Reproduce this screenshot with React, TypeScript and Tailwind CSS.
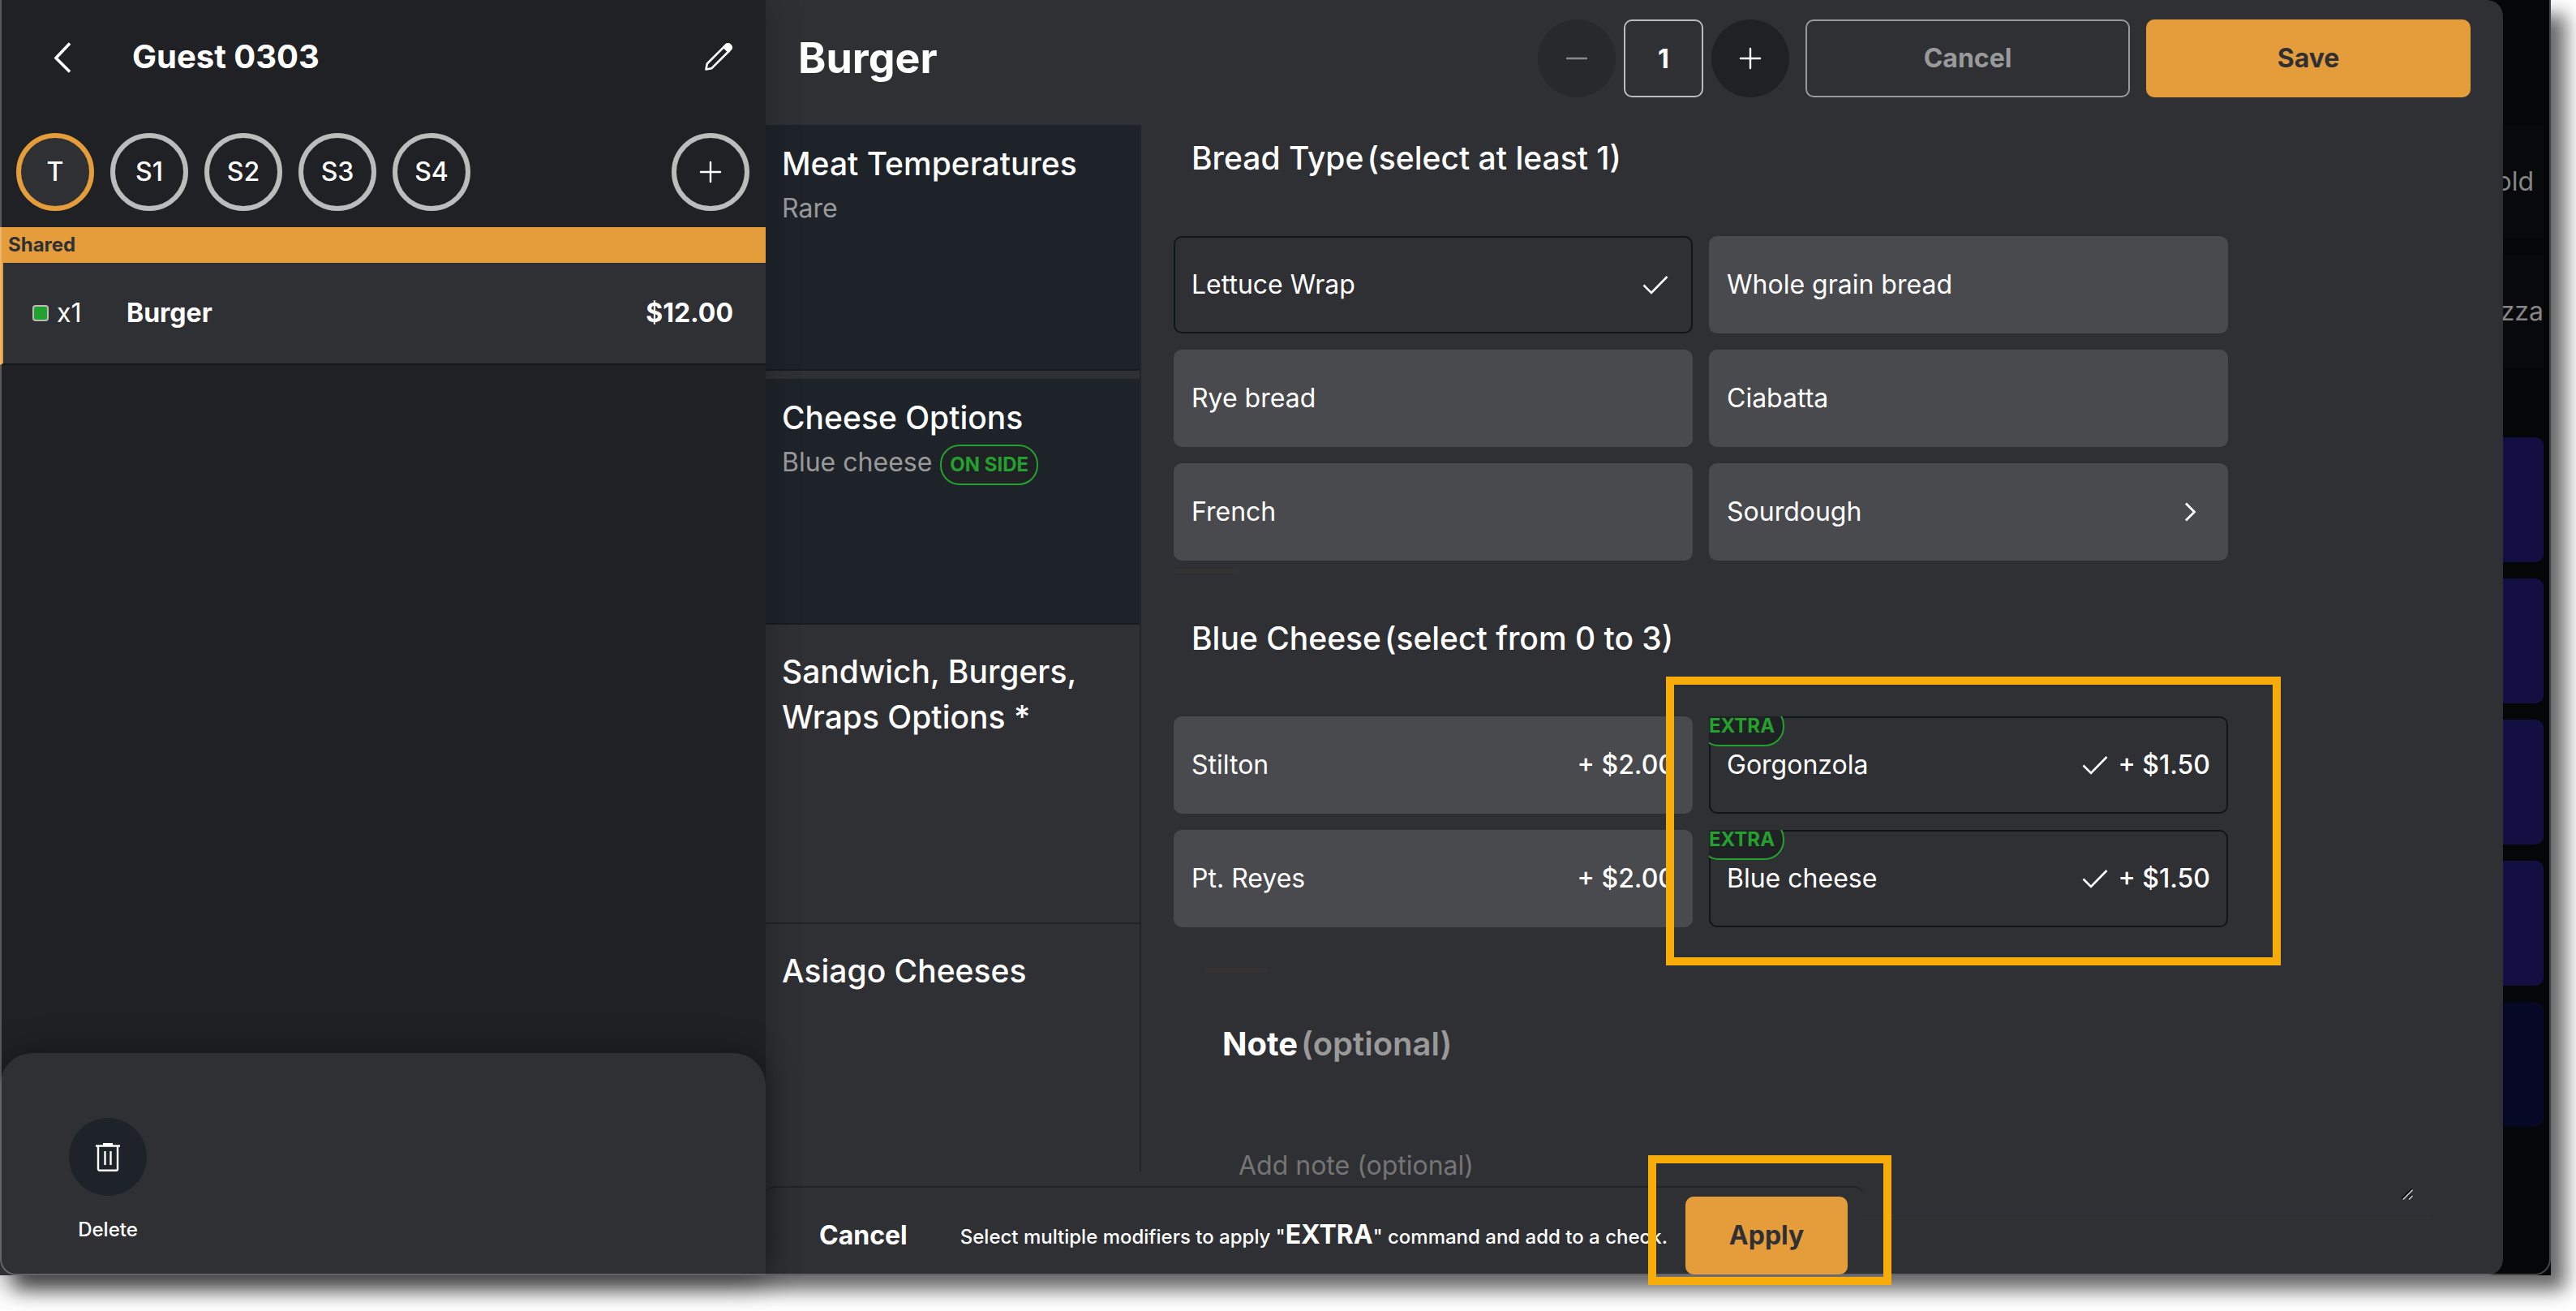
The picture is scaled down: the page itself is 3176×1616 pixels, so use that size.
import React from "react";

const seats = ["T", "S1", "S2", "S3", "S4"];

type Category = { title: string; choice?: string; tag?: string; filled?: boolean };

const categories: Category[] = [
  { title: "Meat Temperatures", choice: "Rare", filled: true },
  { title: "Cheese Options", choice: "Blue cheese", tag: "ON SIDE", filled: true },
  { title: "Sandwich, Burgers, Wraps Options *" },
];

type Option = { name: string; price?: string; selected?: boolean; extra?: boolean; more?: boolean };

const breads: Option[] = [
  { name: "Lettuce Wrap", selected: true },
  { name: "Whole grain bread" },
  { name: "Rye bread" },
  { name: "Ciabatta" },
  { name: "French" },
  { name: "Sourdough", more: true },
];

const cheeses: Option[] = [
  { name: "Stilton", price: "+ $2.00" },
  { name: "Gorgonzola", price: "+ $1.50", selected: true, extra: true },
  { name: "Pt. Reyes", price: "+ $2.00" },
  { name: "Blue cheese", price: "+ $1.50", selected: true, extra: true },
];

function PlusIcon() {
  return (
    <svg width="28" height="28" viewBox="0 0 28 28" fill="none" stroke="currentColor" strokeWidth="2.4" strokeLinecap="round" aria-hidden="true">
      <path d="M14 2v24M2 14h24" />
    </svg>
  );
}

function CheckIcon() {
  return (
    <svg width="48" height="48" viewBox="0 0 48 48" fill="none" stroke="currentColor" strokeWidth="2.6" aria-hidden="true">
      <path d="M9.500 24.500l9.500 9.500L38.500 14" />
    </svg>
  );
}

function ChevronIcon() {
  return (
    <svg width="48" height="48" viewBox="0 0 48 48" fill="none" stroke="currentColor" strokeWidth="2.8" aria-hidden="true">
      <path d="M18 13.500L28.500 24 18 34.500" />
    </svg>
  );
}

function Tag({ children }: { children: React.ReactNode }) {
  return (
    <span className="inline-flex h-[50px] items-center rounded-3xl border-2 border-[#23a02d] bg-[#202124] px-[10px] text-2xl font-bold text-[#23a02d]">
      {children}
    </span>
  );
}

function Sidebar() {
  return (
    <aside className="relative z-10 flex w-[944px] shrink-0 flex-col bg-[#202124] shadow-[0_0_40px_rgba(0,0,0,0.25)]">
      <header className="flex h-[140px] items-center pr-10 pl-[62px]">
        <button aria-label="Back" className="text-white">
          <svg width="30" height="40" viewBox="0 0 30 40" fill="none" stroke="currentColor" strokeWidth="3.6" aria-hidden="true">
            <path d="M24 3.500L7 21.500L24 38.500" />
          </svg>
        </button>
        <h1 className="ml-[71px] flex-1 text-[40px] leading-[56px] font-bold">Guest 0303</h1>
        <button aria-label="Edit guest" className="text-white">
          <svg width="36" height="36" viewBox="0 0 36 36" fill="none" stroke="currentColor" strokeWidth="2.6" strokeLinejoin="round" aria-hidden="true">
            <path d="M2.500 33.500l1.300-7L24.500 5.800l5.700 5.700L9.500 32.200z" />
            <path d="M24.500 5.800l2.600-2.600a3.300 3.300 0 0 1 4.700 0l1 1a3.300 3.300 0 0 1 0 4.700L30.200 11.500z" fill="currentColor" />
          </svg>
        </button>
      </header>

      <nav aria-label="Seats" className="flex items-center gap-5 px-5 pt-6 pb-5">
        {seats.map((seat, i) => (
          <button
            key={seat}
            className={
              i === 0
                ? "size-24 rounded-full border-6 border-[#e59d3c] bg-[#2f3034] text-[32px] leading-[44px] font-medium"
                : "size-24 rounded-full border-6 border-[#bcbcbc] text-[32px] leading-[44px] font-medium"
            }
          >
            {seat}
          </button>
        ))}
        <button aria-label="Add seat" className="ml-auto flex size-24 items-center justify-center rounded-full border-6 border-[#bcbcbc]">
          <PlusIcon />
        </button>
      </nav>

      <h2 className="bg-[#e59d3c] pl-[10px] text-2xl leading-[44px] font-bold text-[#2f3034]">Shared</h2>
      <div className="flex h-[126px] items-center border-b-2 border-l-4 border-b-[#0e161c] border-l-[#e59d3c] bg-[#2f3034] pr-10 pl-9 text-[32px] leading-[44px]">
        <span className="size-5 rounded-sm border-2 border-[#bcbcbc] bg-[#23a02d]" />
        <span className="ml-[10px] w-[86px]">x1</span>
        <span className="flex-1 font-bold">Burger</span>
        <span className="font-bold">$12.00</span>
      </div>

      <footer className="mt-auto rounded-t-[40px] bg-[#2f3034] px-[85px] pt-20 pb-[38px] shadow-[0_0_40px_rgba(0,0,0,0.4)]">
        <button className="flex w-24 flex-col items-center">
          <span className="flex size-24 items-center justify-center rounded-full bg-[#1e2329]">
            <svg width="32" height="36" viewBox="0 0 32 36" fill="none" stroke="currentColor" strokeWidth="2.4" aria-hidden="true">
              <path d="M1 4.500h30M10 2.200h12M4 5v28a1.800 1.800 0 0 0 1.800 1.800h20.400A1.800 1.800 0 0 0 28 33V5M12.500 11v17M19.500 11v17" />
            </svg>
          </span>
          <span className="mt-6 text-2xl leading-9 font-medium">Delete</span>
        </button>
      </footer>
    </aside>
  );
}

function OptionCard({ option }: { option: Option }) {
  return (
    <div className="relative overflow-hidden">
      <button
        aria-pressed={!!option.selected}
        className={
          option.selected
            ? "flex h-[120px] w-full items-center rounded-[10px] border-2 border-[#0e161c] bg-[#2f3034] px-5 text-left text-[32px] leading-[44px]"
            : "flex h-[120px] w-full items-center rounded-[10px] border-2 border-[#494a4d] bg-[#494a4d] px-5 text-left text-[32px] leading-[44px]"
        }
      >
        <span className="flex-1">{option.name}</span>
        {option.selected && <CheckIcon />}
        {option.more && <ChevronIcon />}
        {option.price && <span className="ml-1 font-medium">{option.price}</span>}
      </button>
      {option.extra && (
        <span className="absolute -top-[13px] -left-3 flex">
          <Tag>EXTRA</Tag>
        </span>
      )}
    </div>
  );
}

function OptionGroup({ title, rule, options }: { title: string; rule: string; options: Option[] }) {
  return (
    <section>
      <h3 className="mb-[68px] flex gap-1 pl-[22px] text-[39px] leading-[56px] font-medium">
        <span>{title}</span>
        <span>{rule}</span>
      </h3>
      <div className="grid grid-cols-[repeat(2,minmax(0,640px))] gap-5">
        {options.map((o) => (
          <OptionCard key={o.name} option={o} />
        ))}
      </div>
    </section>
  );
}

function CategoryList() {
  return (
    <nav aria-label="Modifier groups" className="mb-32 flex w-[463px] shrink-0 flex-col gap-[10px] border-r-2 border-[#202529]">
      {categories.map((c) => (
        <button
          key={c.title}
          className={
            c.filled
              ? "border-b-2 border-[#171c21] bg-[#1e2329] px-5 pt-5 pb-[171px] text-left"
              : "border-b-2 border-[#202529] px-5 pt-5 pb-[171px] text-left"
          }
        >
          <span className="block text-[39px] leading-[56px] font-medium">{c.title}</span>
          <span className="flex h-[54px] items-start gap-[10px] pt-[5px] text-[32px] leading-[44px] text-[#9a9a9a]">
            {c.choice}
            {c.tag && <Tag>{c.tag}</Tag>}
          </span>
        </button>
      ))}
      <button className="flex flex-1 items-start px-5 pt-5 text-left text-[39px] leading-[56px] font-medium">Asiago Cheeses</button>
    </nav>
  );
}

function ActionBar() {
  return (
    <div className="absolute bottom-0 left-0 flex h-[110px] items-center rounded-t-xl border-t-2 border-[#202529] bg-[#2f3034] pt-[10px] pr-5 pl-[66px]">
      <button className="text-[32px] leading-[44px] font-bold">Cancel</button>
      <p className="ml-[65px] text-2xl leading-[44px] font-medium whitespace-nowrap">
        Select multiple modifiers to apply "<strong className="text-[32px] font-bold">EXTRA</strong>" command and add to a check.
      </p>
      <div className="relative z-20 ml-[22px]">
        <button className="h-24 w-[200px] rounded-[10px] bg-[#e59d3c] text-[32px] leading-[44px] font-bold text-[#2f3034]">Apply</button>
        <span className="pointer-events-none absolute -top-[51px] -right-[54px] -bottom-[13px] -left-[46px] border-10 border-[#f8ac0a]" />
      </div>
    </div>
  );
}

function ModifierDialog() {
  return (
    <main className="relative flex min-w-0 flex-1 flex-col rounded-r-[20px] bg-[#2f3034]">
      <header className="flex items-center pt-6 pr-10 pb-[34px] pl-10">
        <h2 className="flex-1 text-[52px] leading-[72px] font-bold">Burger</h2>
        <div className="flex items-center gap-[10px]">
          <button aria-label="Decrease quantity" disabled className="flex size-24 items-center justify-center rounded-full bg-[#28292d] text-[#88898b]">
            <svg width="28" height="28" viewBox="0 0 28 28" stroke="currentColor" strokeWidth="2.4" strokeLinecap="round" aria-hidden="true">
              <path d="M2 14h24" />
            </svg>
          </button>
          <input
            aria-label="Quantity"
            defaultValue="1"
            className="h-24 w-[98px] rounded-[10px] border-2 border-[#bcbcbc] bg-transparent text-center text-[32px] leading-[44px] font-bold"
          />
          <button aria-label="Increase quantity" className="flex size-24 items-center justify-center rounded-full bg-[#202124]">
            <PlusIcon />
          </button>
        </div>
        <button className="ml-5 h-24 w-[400px] rounded-[10px] border-2 border-[#9a9a9a] text-[32px] leading-[44px] font-bold text-[#9a9a9a]">Cancel</button>
        <button className="ml-5 h-24 w-[400px] rounded-[10px] bg-[#e59d3c] text-[32px] leading-[44px] font-bold text-[#2f3034]">Save</button>
      </header>

      <div className="flex flex-1">
        <CategoryList />
        <div className="min-w-0 flex-1 pt-[13px] pl-10">
          <OptionGroup title="Bread Type" rule="(select at least 1)" options={breads} />
          <div className="mt-[10px] mb-[52px] h-1.5 w-20 bg-[#343331]" />
          <div className="relative">
            <OptionGroup title="Blue Cheese" rule="(select from 0 to 3)" options={cheeses} />
            <span className="pointer-events-none absolute top-[75px] -bottom-[47px] left-[607px] w-[758px] border-10 border-[#f8ac0a]" />
          </div>
          <div className="mt-[50px] mr-[90px] ml-10">
            <div className="mb-[60px] h-1.5 w-[76px] bg-[#343331]" />
            <label htmlFor="note" className="mb-20 flex gap-1 pl-5 text-[40px] leading-[56px] font-bold">
              <span>Note</span>
              <span className="font-semibold text-[#9a9a9a]">(optional)</span>
            </label>
            <div className="border-b-2 border-[#343331] px-5 pb-5">
              <div className="relative">
                <textarea
                  id="note"
                  placeholder="Add note (optional)"
                  className="block h-[86px] w-full resize-none bg-transparent px-5 pt-5 text-[32px] leading-[44px] placeholder:text-[#757575]"
                />
                <svg width="16" height="16" viewBox="0 0 16 16" fill="none" strokeWidth="1.6" className="pointer-events-none absolute right-0 bottom-0" aria-hidden="true">
                  <path d="M1.500 12.500L13.500 0.500M9 12.500l4.500-4.500" stroke="#000000" />
                  <path d="M2.800 13.500L14.500 1.800M10 13.500l4.500-4.500" stroke="#d0d0d0" />
                </svg>
              </div>
            </div>
          </div>
        </div>
      </div>
      <ActionBar />
    </main>
  );
}

/* The strip of the menu screen that stays visible beside the dialog. */
function MenuStrip() {
  return (
    <div aria-hidden="true" className="flex w-[59px] shrink-0 flex-col gap-5 pt-[154px] pr-[9px] text-[32px] leading-[44px] text-[#858585]">
      <div className="flex h-[140px] items-center justify-end overflow-hidden bg-[#08090b] pr-3">old</div>
      <div className="flex h-[140px] items-center justify-end overflow-hidden bg-[#08090b]">zza</div>
      <div className="mt-[65px] h-[154px] rounded-r-[10px] bg-[#130f42]" />
      <div className="h-[154px] rounded-r-[10px] bg-[#130f42]" />
      <div className="h-[154px] rounded-r-[10px] bg-[#130f42]" />
      <div className="h-[154px] rounded-r-[10px] bg-[#130f42]" />
      <div className="h-[154px] rounded-r-[10px] bg-[#070825]" />
    </div>
  );
}

export default function App() {
  return (
    <div className="flex min-h-screen overflow-hidden bg-white pr-[31px] pb-11 font-['Inter',sans-serif] text-white">
      <div className="relative flex flex-1 bg-[#040607] shadow-[18px_18px_22px_rgba(0,0,0,0.6)]">
        <Sidebar />
        <ModifierDialog />
        <MenuStrip />
        <div className="pointer-events-none absolute inset-0 z-10 rounded-b-[20px] border-x-2 border-b-2 border-white/25" />
      </div>
    </div>
  );
}
